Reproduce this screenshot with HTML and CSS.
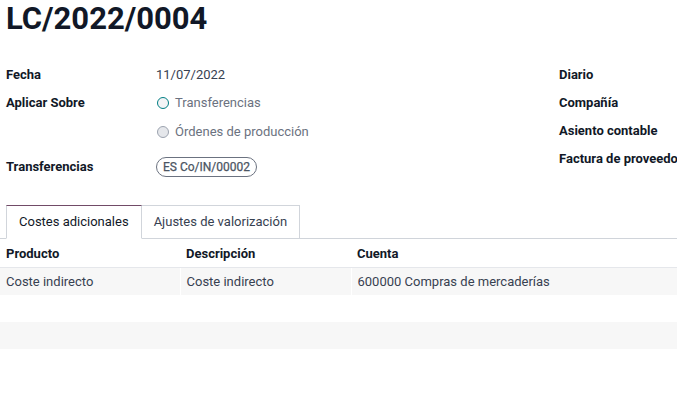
FILE: index.html
```html
<!DOCTYPE html>
<html lang="es">
<head>
<meta charset="utf-8">
<link rel="stylesheet" href="styles.css">
</head>
<body>
<div class="sheet">
  <h1 class="title">LC/2022/0004</h1>
  <div class="groups">
    <div class="group left">
      <div class="row">
        <div class="label">Fecha</div>
        <div class="value">11/07/2022</div>
      </div>
      <div class="row">
        <div class="label">Aplicar Sobre</div>
        <div class="value radios">
          <div class="radio"><span class="dot checked"></span><span class="rtext">Transferencias</span></div>
          <div class="radio"><span class="dot"></span><span class="rtext">Órdenes de producción</span></div>
        </div>
      </div>
      <div class="row tagrow">
        <div class="label">Transferencias</div>
        <div class="value"><span class="tag">ES Co/IN/00002</span></div>
      </div>
    </div>
    <div class="group right">
      <div class="rlabel">Diario</div>
      <div class="rlabel">Compañía</div>
      <div class="rlabel">Asiento contable</div>
      <div class="rlabel">Factura de proveedor</div>
    </div>
  </div>
</div>
<div class="notebook">
  <ul class="tabs">
    <li class="tab active">Costes adicionales</li>
    <li class="tab">Ajustes de valorización</li>
  </ul>
  <table class="lines">
    <thead>
      <tr><th class="c1">Producto</th><th class="c2">Descripción</th><th class="c3">Cuenta</th></tr>
    </thead>
    <tbody>
      <tr class="odd data"><td>Coste indirecto</td><td>Coste indirecto</td><td>600000 Compras de mercaderías</td></tr>
      <tr class="even"><td></td><td></td><td></td></tr>
      <tr class="odd"><td></td><td></td><td></td></tr>
    </tbody>
  </table>
</div>
</body>
</html>
```

FILE: styles.css
```css
html, body {
  margin: 0;
  padding: 0;
  background: #fff;
  overflow: hidden;
}
body {
  font-family: Roboto, "Liberation Sans", sans-serif;
  font-size: 13px;
  color: #374151;
  width: 677px;
}
.sheet {
  padding-left: 6px;
  overflow: hidden;
}
.title {
  margin: 0;
  padding-top: 1px;
  height: 60px;
  font-size: 31px;
  line-height: 36px;
  font-weight: 700;
  color: #111827;
}
.groups {
  display: flex;
  height: 144px;
}
.group.left {
  width: 553px;
  flex-shrink: 0;
  display: flex;
  flex-direction: column;
}
.row {
  display: flex;
}
.label {
  width: 150px;
  font-weight: 700;
  color: #111827;
  line-height: 28px;
}
.value {
  line-height: 28px;
}
.radios {
  display: flex;
  flex-direction: column;
}
.radio {
  display: flex;
  align-items: center;
  height: 29px;
  color: #6b7280;
}
.radio:first-child {
  height: 28px;
}
.dot {
  box-sizing: border-box;
  width: 12px;
  height: 12px;
  border-radius: 50%;
  border: 1px solid #9ca3af;
  background: #e5e7eb;
  margin-left: 1px;
  margin-right: 6px;
}
.dot.checked {
  border: 1.5px solid #017e84;
  background: #f3f4f6;
}
.tagrow {
  margin-top: 7px;
}
.tag {
  display: inline-block;
  border: 1px solid #6b7280;
  border-radius: 10px;
  padding: 0 6px;
  line-height: 18px;
  font-size: 12px;
  font-weight: 400;
  color: #4b5563;
  -webkit-text-stroke: 0.25px #4b5563;
}
.group.right {
  display: flex;
  flex-direction: column;
  white-space: nowrap;
  flex-shrink: 0;
}
.rlabel {
  font-weight: 700;
  color: #111827;
  line-height: 28px;
}
.notebook {
  width: 677px;
}
.tabs {
  list-style: none;
  margin: 0;
  padding: 0 0 0 6px;
  display: flex;
  border-bottom: 1px solid #d1d5db;
}
.tab {
  box-sizing: border-box;
  height: 34px;
  line-height: 32px;
  padding: 0 12px;
  margin-bottom: -1px;
  border: 1px solid #d1d5db;
  border-left: none;
  color: #374151;
  background: #fff;
}
.tab.active {
  border: 1px solid #d1d5db;
  border-top-color: #714b67;
  border-bottom-color: #fff;
  color: #111827;
}
.lines {
  width: 100%;
  border-collapse: collapse;
  table-layout: fixed;
}
.lines thead tr {
  box-shadow: 0 1px 2px rgba(0,0,0,0.10);
}
.lines th, .lines td {
  text-align: left;
  padding: 0 6px;
  height: 27px;
}
.lines th {
  font-weight: 700;
  color: #111827;
  height: 28px;
  border-bottom: 1px solid #e5e7eb;
}
.c1 { width: 168px; }
.c2 { width: 159px; }
.lines tr.data td + td {
  border-left: 1px solid #fff;
}
.lines tr.odd td {
  background: #f7f7f7;
}
.lines tr.even td {
  background: #fff;
}
```
